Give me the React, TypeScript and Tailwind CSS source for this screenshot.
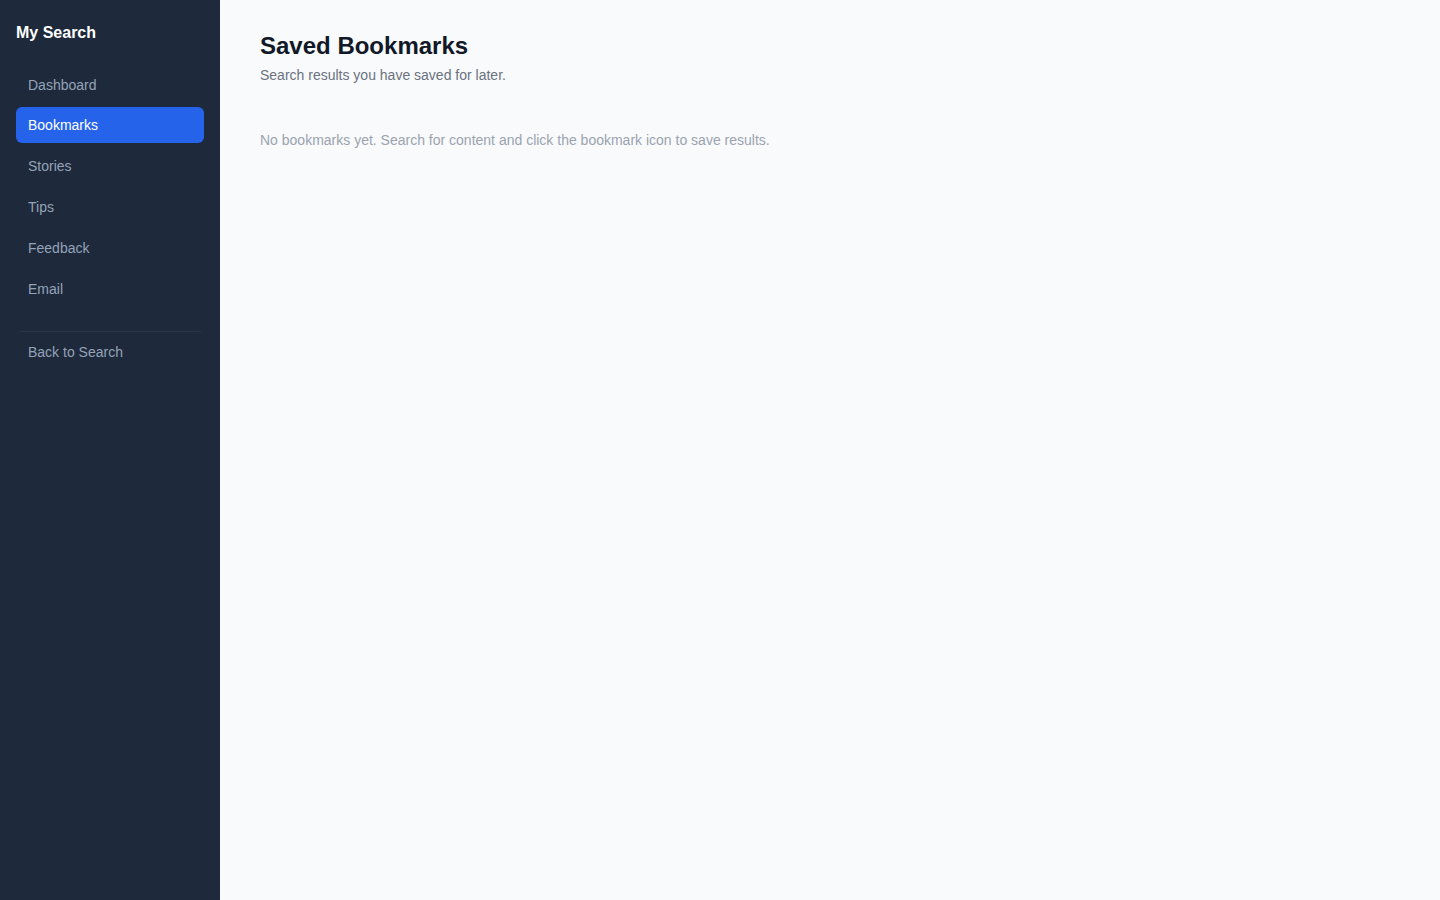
import React from "react";

const items = ["Dashboard", "Bookmarks", "Stories", "Tips", "Feedback", "Email"];

export default function App() {
  return (
    <div
      className="flex min-h-screen w-full"
      style={{ fontFamily: '"Liberation Sans", Arial, sans-serif' }}
    >
      <aside className="w-[220px] shrink-0 bg-[#1e293b] px-4 pt-[21px] min-h-screen">
        <div className="text-base font-bold leading-6 text-white">My Search</div>
        <nav className="mt-[22px] flex flex-col gap-[5px]">
          {items.map((it, i) => (
            <div
              key={it}
              className={
                (i === 0 ? "-mb-px " : "") +
                (it === "Bookmarks"
                  ? "flex h-9 items-center rounded-md bg-[#2563eb] px-3 text-sm text-white"
                  : "flex h-9 items-center rounded-md px-3 text-sm text-[#94a3b8]")
              }
            >
              {it}
            </div>
          ))}
        </nav>
        <div className="mt-6 rounded-md border-t border-[#2b3649] pt-[2px]">
          <div className="flex h-9 items-center px-3 text-sm text-[#94a3b8]">Back to Search</div>
        </div>
      </aside>
      <main className="flex-1 bg-[#f8fafc] px-10 pt-[30px]">
        <h1 className="text-2xl font-bold leading-8 text-[#111827]">Saved Bookmarks</h1>
        <p className="mt-[3px] text-sm leading-5 text-[#6b7280]">Search results you have saved for later.</p>
        <p className="mt-[45px] text-sm leading-5 text-[#9ca3af]">
          No bookmarks yet. Search for content and click the bookmark icon to save results.
        </p>
      </main>
    </div>
  );
}
